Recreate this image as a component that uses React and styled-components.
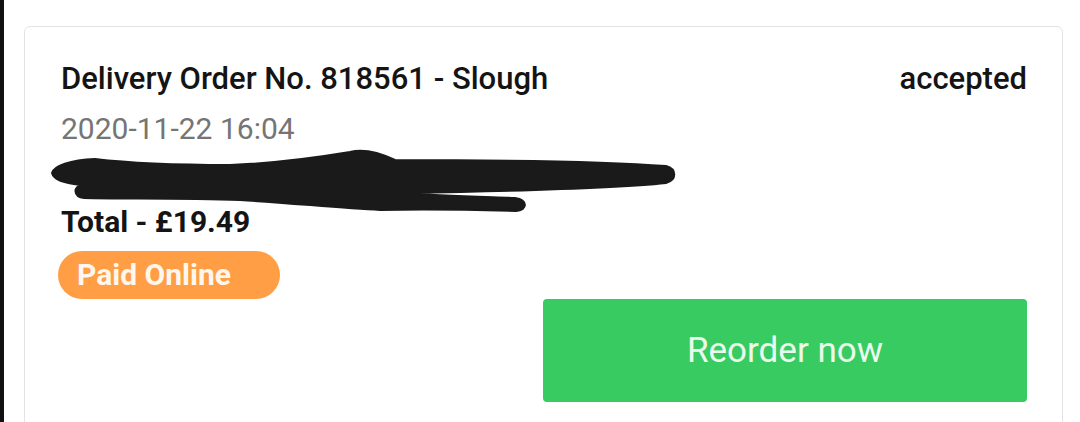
import React from 'react';
import styled, { createGlobalStyle } from 'styled-components';

const GlobalStyle = createGlobalStyle`
  html, body {
    margin: 0;
    padding: 0;
    background: #fff;
    font-family: Roboto, "Liberation Sans", sans-serif;
  }
`;

const Page = styled.div`
  display: flex;
  height: 422px;
  overflow: hidden;
`;

const EdgeBar = styled.div`
  width: 4px;
  flex-shrink: 0;
  background: #111;
`;

const Main = styled.main`
  flex: 1;
  padding: 26px 17px 0 20px;
`;

const Card = styled.section`
  border: 1px solid #e3e3e3;
  border-radius: 6px;
  padding: 33px 35px 30px 36px;
  display: flex;
  flex-direction: column;
`;

const Header = styled.div`
  display: flex;
  justify-content: space-between;
  align-items: baseline;
`;

const Title = styled.h2`
  margin: 0;
  font-size: 31px;
  line-height: 36px;
  font-weight: 500;
  color: #141414;
`;

const Status = styled.span`
  font-size: 31px;
  font-weight: 500;
  color: #141414;
`;

const DateLine = styled.div`
  margin-top: 14px;
  font-size: 30px;
  line-height: 36px;
  color: #757575;
`;

const Redacted = styled.div`
  position: relative;
  height: 57px;
`;

const Scribble = styled.svg`
  position: absolute;
  left: -11px;
  top: -1px;
  overflow: visible;
`;

const Total = styled.div`
  font-size: 30px;
  line-height: 36px;
  font-weight: 700;
  color: #141414;
`;

const Badge = styled.span`
  align-self: flex-start;
  margin-top: 11px;
  width: 222px;
  box-sizing: border-box;
  height: 48px;
  line-height: 48px;
  padding-left: 19px;
  margin-left: -3px;
  border-radius: 24px;
  background: #ff9e45;
  color: #fff7ee;
  font-size: 30px;
  font-weight: 700;
`;

const Actions = styled.div`
  display: flex;
  justify-content: flex-end;
`;

const ReorderButton = styled.button`
  width: 484px;
  height: 103px;
  border: none;
  border-radius: 4px;
  background: #37cb62;
  color: #eafbed;
  font-family: Roboto, "Liberation Sans", sans-serif;
  font-size: 35px;
  font-weight: 400;
  cursor: pointer;
`;

const scribblePath =
  'M52 172 C 54 165, 70 159, 95 158 C 120 161, 160 164, 230 164 C 280 162, 320 156, 350 151 ' +
  'C 362 148, 376 150, 395 159 C 480 159, 600 160, 666 165 C 677 168, 677 179, 666 182 ' +
  'C 620 187, 520 190, 405 192 C 440 195, 490 196, 515 197 C 528 199, 528 209, 516 210 ' +
  'C 480 209, 430 208, 380 209 C 340 207, 290 202, 240 199 C 180 197, 120 198, 84 197 ' +
  'C 73 196, 73 185, 82 184 C 70 183, 54 180, 52 172 Z';

const Redaction = () => (
  <Redacted>
    <Scribble width="630" height="70" viewBox="50 145 630 70">
      <path
        d={scribblePath}
        fill="#1a1a1a"
        stroke="#1a1a1a"
        strokeWidth="2"
        strokeLinejoin="round"
      />
    </Scribble>
  </Redacted>
);

export default function App() {
  return (
    <>
      <GlobalStyle />
      <Page>
        <EdgeBar />
        <Main>
          <Card>
            <Header>
              <Title>Delivery Order No. 818561 - Slough</Title>
              <Status>accepted</Status>
            </Header>
            <DateLine>2020-11-22 16:04</DateLine>
            <Redaction />
            <Total>Total - £19.49</Total>
            <Badge>Paid Online</Badge>
            <Actions>
              <ReorderButton>Reorder now</ReorderButton>
            </Actions>
          </Card>
        </Main>
      </Page>
    </>
  );
}
